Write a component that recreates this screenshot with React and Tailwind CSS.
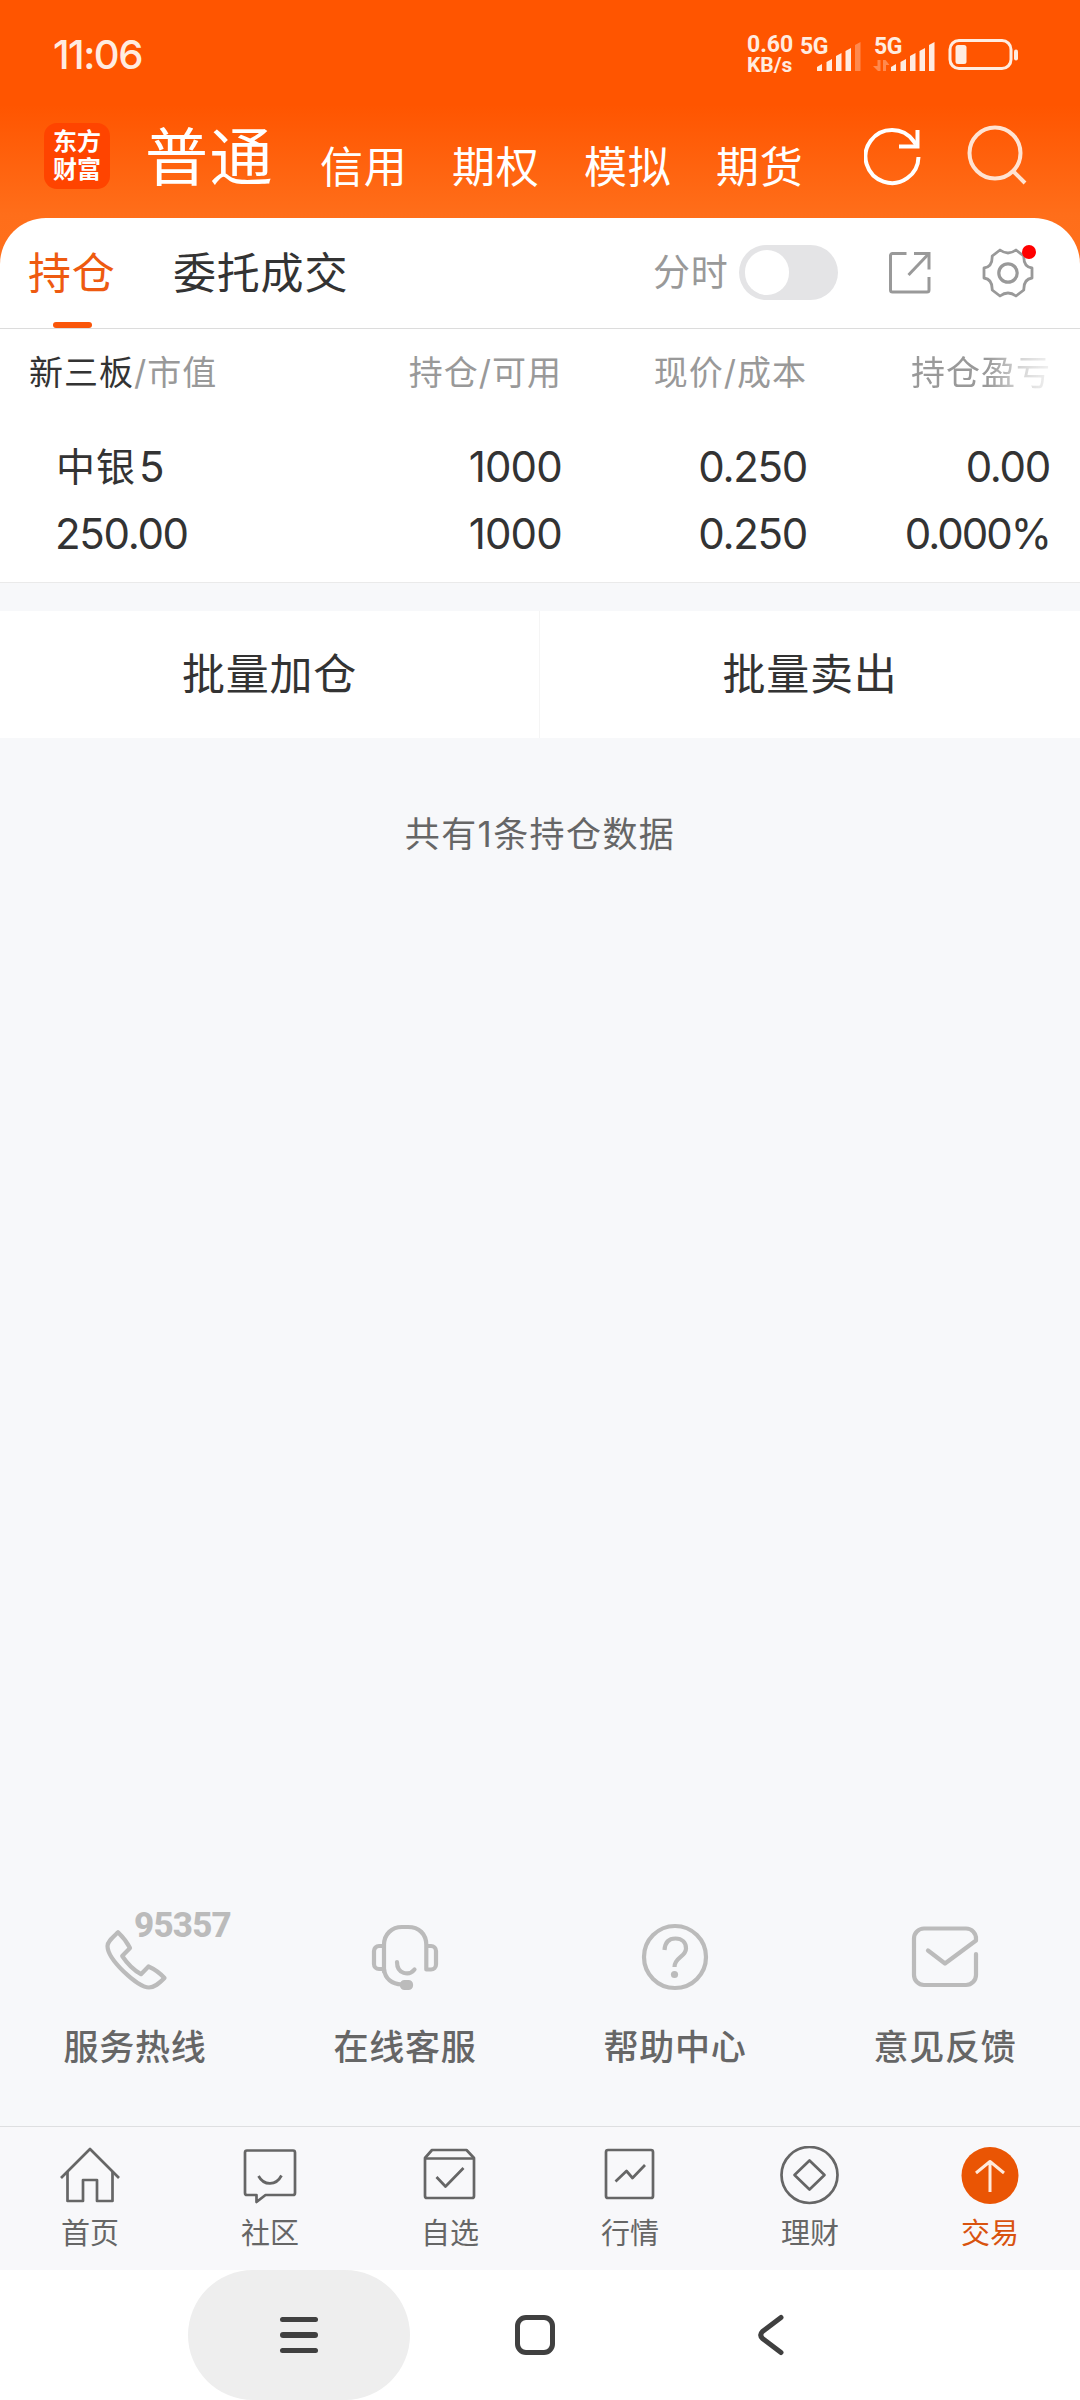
import React, { useState } from 'react';
import clsx from 'clsx';

const accounts = ['信用', '期权', '模拟', '期货'];

const Signal = ({ weak, arrows }) => (
    <div className="relative w-[63px] h-[36px] shrink-0">
        <span className="absolute left-[1px] top-0 text-[23px] leading-[20px] font-bold tracking-[-0.5px]">5G</span>
        <svg className="absolute left-0 top-0" width="63" height="36" fill="currentColor">
            <path d="M18 34v-4l5-3v7z" />
            <path d="M27.500 34v-9l5.500-3v12z" />
            <path d="M37 34v-15l5.500-3v18z" />
            <path d="M46.500 34v-20l5.500-3v23z" />
            <path d="M56 34v-26l5.500-3v29z" opacity={weak ? 0.35 : 1} />
            {arrows && <path d="M4.500 23h3v11h-2.500l-5-5h4.500zM10 34v-11h2.500l4 5h-3.500v6z" opacity="0.35" />}
        </svg>
    </div>
);

const StatusBar = () => (
    <div className="h-[110px] flex items-center justify-between pl-[53px] pr-[61px] text-[#ffece0]">
        <span className="text-[40px] leading-[44px] font-medium tracking-[-1.5px]">11:06</span>
        <div className="flex items-center font-['Roboto',sans-serif]">
            <div className="w-[52px] -ml-px text-[23px] leading-[20px] font-bold">
                <div>0.60</div>
                <div className="text-[21px]">KB/s</div>
            </div>
            <Signal weak />
            <div className="w-[11px]" />
            <Signal arrows />
            <svg className="ml-[12px]" width="71" height="32" fill="none">
                <rect x="2" y="1.500" width="61" height="28" rx="9" stroke="currentColor" strokeWidth="3" />
                <rect x="7.500" y="6" width="11" height="19" rx="2.500" fill="currentColor" />
                <rect x="66" y="10.500" width="4" height="11" rx="2" fill="currentColor" />
            </svg>
        </div>
    </div>
);

const Header = () => (
    <div className="h-[108px] flex pl-[44px] text-white">
        <div className="mt-[13px] w-[66px] h-[66px] rounded-[13px] bg-[#ff4400] flex flex-col items-center justify-center text-[24px] leading-[28px] font-bold">
            <span>东方</span>
            <span>财富</span>
        </div>
        <span className="ml-[35px] mt-[7px] w-[132px] text-[63px] leading-[80px] tracking-[1.5px] whitespace-nowrap">普通</span>
        <div className="ml-[43px] mt-[32px] flex gap-[44px] text-[43px] leading-[50px] tracking-[0.8px]">
            {accounts.map((name) => (
                <span key={name} className="w-[88px] shrink-0">{name}</span>
            ))}
        </div>
        <svg className="ml-[60px] mt-[15px] shrink-0" width="60" height="62" fill="none" stroke="currentColor" strokeWidth="4">
            <path d="M54.500 32a26.500 26.500 0 1 1-5-16l2.500 3.500" />
            <path d="M53.500 5v16.500H35" />
        </svg>
        <svg className="ml-[42px] mt-[14px] shrink-0" width="62" height="62" fill="none" stroke="#ffe3d2" strokeWidth="4">
            <circle cx="29" cy="29" r="25.500" />
            <path d="M46 46l13 13" />
        </svg>
    </div>
);

const Tabs = () => {
    const [intraday, setIntraday] = useState(false);

    return (
        <div className="h-[111px] flex items-center bg-white rounded-t-[46px] border-b border-[#dcdcdc] pl-[28px]">
            <div className="relative h-full w-[88px] flex items-center text-[43px] tracking-[0.8px] text-[#ee5a10]">
                持仓
                <div className="absolute left-[25px] bottom-0 w-[39px] h-[6px] rounded-full bg-[#fa560a]" />
            </div>
            <span className="ml-[57px] w-[177px] text-[43px] tracking-[0.8px] text-[#333]">委托成交</span>
            <span className="ml-[303px] w-[76px] text-[37px] tracking-[0.8px] text-[#999] whitespace-nowrap">分时</span>
            <button
                onClick={() => setIntraday(!intraday)}
                className={clsx('ml-[10px] mb-[2px] w-[99px] h-[55px] rounded-full bg-[#e4e4e6] flex items-center px-[6px]', intraday && 'justify-end')}
            >
                <span className="w-[44px] h-[45px] rounded-full bg-white" />
            </button>
            <svg className="ml-[50px]" width="44" height="44" fill="none" stroke="#999" strokeWidth="3">
                <path d="M18.500 2.500H4.500a2 2 0 0 0-2 2V39a2 2 0 0 0 2 2H39a2 2 0 0 0 2-2V26" />
                <path d="M26 2.500h15v16" />
                <path d="M40.500 3L20.500 24" />
            </svg>
            <div className="relative ml-[50px]">
                <svg width="52" height="52" viewBox="-26 -26 52 52" fill="none" stroke="#999" strokeWidth="2.800" strokeLinejoin="round">
                    <path d="M-24 -5Q-15.500 -6 -15.800 -17L-8 -23Q0 -17 8 -23L15.800 -17Q15.500 -6 24 -5V5Q15.500 6 15.800 17L8 23Q0 17 -8 23L-15.800 17Q-15.500 6 -24 5Z" />
                    <circle r="9.200" strokeWidth="3.200" />
                </svg>
                <span className="absolute right-[-2px] top-[-2px] w-[14px] h-[14px] rounded-full bg-[#ff0000]" />
            </div>
        </div>
    );
};

const Holdings = () => (
    <div className="h-[254px] bg-white border-b border-[#eaeaea]">
        <div className="mt-[23px] grid grid-cols-[300px_262px_245px_244px] text-[34px] leading-[42px] tracking-[1px] text-[#999] text-right">
            <div className="text-left pl-[29px]"><span className="text-[#333]">新三板</span>/市值</div>
            <div>持仓/可用</div>
            <div>现价/成本</div>
            <div className="[mask-image:linear-gradient(to_right,#000_74%,rgba(0,0,0,0.4)_88%,rgba(0,0,0,0.12)_100%)]">持仓盈亏</div>
        </div>
        <div className="mt-[40px] grid grid-cols-[300px_262px_245px_243px] text-[42px] leading-[66px] text-[#333] text-right tracking-[-1.3px]">
            <div className="text-left pl-[56px]">
                <span className="relative top-[-1px] text-[39px] tracking-[1px]">中银</span>
                <span className="ml-[3px]">5</span>
            </div>
            <div className="tracking-[-0.8px]">1000</div>
            <div>0.250</div>
            <div>0.00</div>
            <div className="text-left pl-[55px]">250.00</div>
            <div className="tracking-[-0.8px]">1000</div>
            <div>0.250</div>
            <div className="tracking-[-2px]">0.000%</div>
        </div>
    </div>
);

const BatchActions = () => (
    <div className="mt-[28px] h-[127px] bg-white grid grid-cols-2 text-[43px] tracking-[0.8px] text-[#333]">
        <button className="border-r border-[#f5f5f5]">批量加仓</button>
        <button>批量卖出</button>
    </div>
);

const services = [
    {
        label: '服务热线',
        badge: '95357',
        icon: <path d="M18 11.300Q25.500 18.500 30 27L22.200 35C26.500 41.500 33.500 49 41 53.200L48.500 45.500Q57.500 49.500 64.500 57C58.500 63 54.500 66.500 49 66.500C37.500 66.500 7.500 38.500 7.500 25C7.500 20.500 12.500 16.500 18 11.300Z" />,
    },
    {
        label: '在线客服',
        icon: (
            <>
                <path d="M14 50.500V24C14 13 22 6 32 6H38C49 6 56.300 13 56.300 24V48.500H61a5 5 0 0 0 5-5V30a5 5 0 0 0-5-5h-4" />
                <path d="M14 25H9a5 5 0 0 0-5 5V43a5 5 0 0 0 5 5h5C15 58 22 63 32 63.500" />
                <path d="M27 41C27 53 39 55.500 44.500 48.500" />
                <rect x="32" y="61" width="9" height="6" rx="2.500" fill="#bbb" />
            </>
        ),
    },
    {
        label: '帮助中心',
        icon: (
            <>
                <circle cx="35" cy="36" r="31" />
                <path strokeLinecap="butt" d="M24.500 29C25 21.500 29 17.500 35.500 17.500C42 17.500 46 21.500 46 27.500C46 36 34.500 36 34.500 46" />
                <circle cx="34.500" cy="53.500" r="3.600" fill="#bbb" stroke="none" />
            </>
        ),
    },
    {
        label: '意见反馈',
        icon: (
            <path d="M18 29.500L35 42.500L66 19.500V18A10 10 0 0 0 56 7.500H14A10 10 0 0 0 4 17.500V54A10 10 0 0 0 14 64H56A10 10 0 0 0 66 54V33" />
        ),
    },
];

const Services = () => (
    <div className="mt-auto mb-[54px] grid grid-cols-4">
        {services.map(({ label, badge, icon }) => (
            <div key={label} className="flex flex-col items-center">
                <div className="relative">
                    <svg width="70" height="72" fill="none" stroke="#bbb" strokeWidth="4.200" strokeLinecap="round" strokeLinejoin="round">{icon}</svg>
                    {badge && <span className="absolute left-[34px] top-[-11px] text-[35px] leading-[32px] font-['Roboto',sans-serif] font-extrabold text-[#bbb] tracking-[-0.8px]">{badge}</span>}
                </div>
                <span className="mt-[30px] text-[35px] leading-[49px] tracking-[0.8px] font-medium text-[#666]">{label}</span>
            </div>
        ))}
    </div>
);

const tabItems = [
    {
        label: '首页',
        icon: (
            <>
                <path d="M2 32L31 3L60 32" />
                <path d="M8.500 26V55H24V34H38V55H53.500V26" />
            </>
        ),
    },
    {
        label: '社区',
        icon: (
            <>
                <path d="M8 4.500H54a2 2 0 0 1 2 2V47a2 2 0 0 1-2 2H26.500L17.500 56V49H8a2 2 0 0 1-2-2V6.500a2 2 0 0 1 2-2Z" />
                <path d="M19.500 30C25 40 37 40 42.500 29.500" />
            </>
        ),
    },
    {
        label: '自选',
        icon: (
            <>
                <path d="M6 12L13 4H47.500L55 12V50a2 2 0 0 1-2 2H8a2 2 0 0 1-2-2Z" />
                <path d="M6 12.500H55M17.500 31L26.500 40.500L44.500 22" />
            </>
        ),
    },
    {
        label: '行情',
        icon: (
            <>
                <rect x="7" y="4" width="47" height="48" rx="2" />
                <path d="M16.500 35.500L27.500 25L33.500 32L46 19" />
            </>
        ),
    },
    {
        label: '理财',
        icon: (
            <>
                <circle cx="30.500" cy="29" r="28" />
                <path d="M30.500 14.500L45.500 29L30.500 43.500L15.500 29Z" />
            </>
        ),
    },
    {
        label: '交易',
        active: true,
        icon: (
            <>
                <circle cx="31" cy="29.500" r="28.500" fill="#ea5504" stroke="none" />
                <path stroke="#ffe9db" strokeWidth="3" d="M31 46V16M17 27L31 15.500L45 27" />
            </>
        ),
    },
];

const TabBar = () => (
    <div className="h-[144px] bg-[#f8f8fa] border-t border-[#dedfe1] grid grid-cols-6 pt-[19px]">
        {tabItems.map(({ label, active, icon }) => (
            <div key={label} className={clsx('flex flex-col items-center', active ? 'text-[#d9530f]' : 'text-[#666]')}>
                <svg width="62" height="60" fill="none" stroke="currentColor" strokeWidth="2.700" strokeLinejoin="round">{icon}</svg>
                <span className="mt-[8px] text-[29px] leading-[40px]">{label}</span>
            </div>
        ))}
    </div>
);

const SystemNav = () => (
    <div className="h-[130px] bg-white flex items-center pl-[188px] text-[#404040]">
        <div className="w-[222px] h-[130px] rounded-full bg-[#eee] flex flex-col items-center justify-center gap-[10px]">
            <span className="w-[38px] h-[5.500px] rounded-full bg-[#404040]" />
            <span className="w-[38px] h-[5.500px] rounded-full bg-[#404040]" />
            <span className="w-[38px] h-[5.500px] rounded-full bg-[#404040]" />
        </div>
        <div className="ml-[105px] w-[40px] h-[40px] rounded-[11px] border-[5px] border-[#404040]" />
        <svg className="ml-[202px]" width="28" height="42" fill="none" stroke="currentColor" strokeWidth="5" strokeLinecap="round" strokeLinejoin="round">
            <path d="M24 3.500L5.500 17.500Q2 21 5.500 24.500L24 38.500" />
        </svg>
    </div>
);

const App = () => (
    <div className="w-[1080px] h-[2400px] flex flex-col overflow-hidden bg-[#f7f8fa] font-['Inter','Noto_Sans_CJK_SC',sans-serif]">
        <div className="bg-[linear-gradient(to_bottom,#ff5500_0px,#ff5500_105px,#ff6e1a_215px,#ff701c_264px,#f7f8fa_264px)]">
            <StatusBar />
            <Header />
            <Tabs />
        </div>
        <Holdings />
        <BatchActions />
        <div className="mt-[71px] text-center text-[35px] leading-[50px] tracking-[1.4px] text-[#666]">共有1条持仓数据</div>
        <Services />
        <TabBar />
        <SystemNav />
    </div>
);

export default App;
